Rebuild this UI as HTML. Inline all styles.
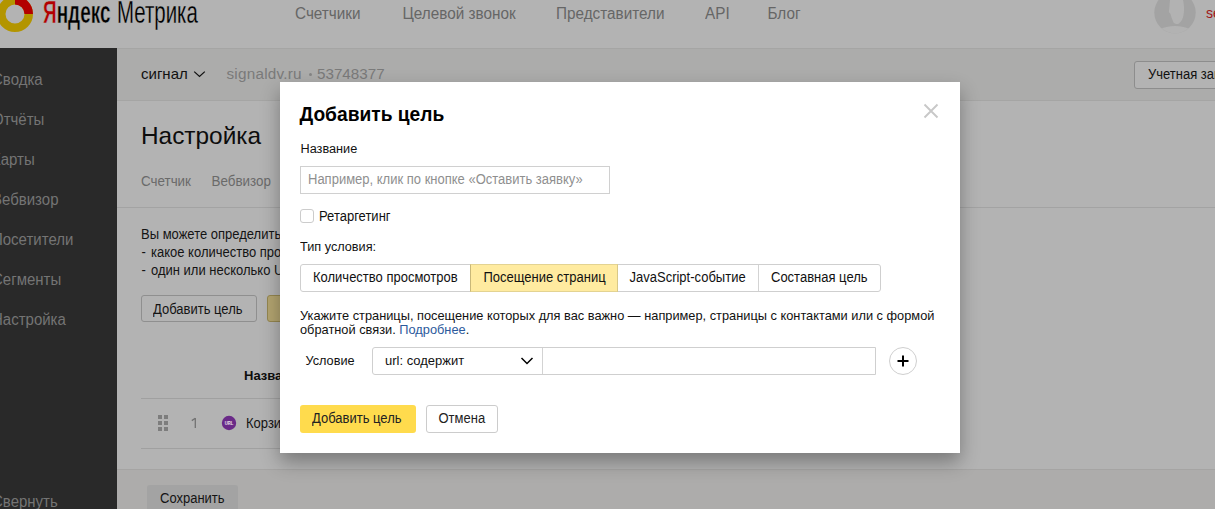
<!DOCTYPE html>
<html><head><meta charset="utf-8"><style>
html,body{margin:0;padding:0;width:1215px;height:509px;overflow:hidden;background:#b3b3b3;}
body{position:relative;font-family:"Liberation Sans",sans-serif;}
.t{position:absolute;white-space:nowrap;}
.b{position:absolute;}
</style></head><body>
<div id="hdr" class="b" style="left:0px;top:0px;width:1215px;height:48px;background:#b3b3b3"></div>
<div id="side" class="b" style="left:0px;top:48px;width:117px;height:461px;background:#292929"></div>
<div id="sub" class="b" style="left:117px;top:48px;width:1098px;height:53px;background:#acacab;border-top:1px solid #a5a5a4;border-bottom:1px solid #a5a5a4;box-sizing:border-box"></div>
<div id="content" class="b" style="left:117px;top:101px;width:1098px;height:368px;background:#b3b3b3"></div>
<div id="foot" class="b" style="left:117px;top:469px;width:1098px;height:40px;background:#adacab;border-top:1px solid #a5a4a3;box-sizing:border-box"></div>
<svg class="b" style="left:0;top:0" width="40" height="40" viewBox="0 0 40 40">
<circle cx="15" cy="14" r="13.75" fill="none" stroke="#b39500" stroke-width="8.5"/>
<path d="M15 0.25 A13.75 13.75 0 0 1 28.75 14" fill="none" stroke="#b30000" stroke-width="8.5"/>
</svg>
<div id="logo1" class="t" style="left:43px;top:-4.29px;font-size:32px;line-height:32px;color:#000;font-weight:700;letter-spacing:0px;transform:scaleX(0.593);transform-origin:0 0;-webkit-text-stroke:0.55px #b3b3b3"><span style="color:#b30000">Я</span>ндекс</div>
<div id="logo2" class="t" style="left:117px;top:-4.49px;font-size:32px;line-height:32px;color:#000;font-weight:400;letter-spacing:0px;transform:scaleX(0.639);transform-origin:0 0;-webkit-text-stroke:0.3px #b3b3b3">Метрика</div>
<div id="n1" class="t" style="left:295px;top:6.15px;font-size:15.3px;line-height:15.3px;color:#666666;font-weight:400;letter-spacing:0px;transform:scaleY(1.1);transform-origin:0 12.95px;">Счетчики</div>
<div id="n2" class="t" style="left:402.5px;top:6.15px;font-size:15.3px;line-height:15.3px;color:#666666;font-weight:400;letter-spacing:0px;transform:scaleY(1.1);transform-origin:0 12.95px;">Целевой звонок</div>
<div id="n3" class="t" style="left:556px;top:6.15px;font-size:15.3px;line-height:15.3px;color:#666666;font-weight:400;letter-spacing:0px;transform:scaleY(1.1);transform-origin:0 12.95px;">Представители</div>
<div id="n4" class="t" style="left:705px;top:6.15px;font-size:15.3px;line-height:15.3px;color:#666666;font-weight:400;letter-spacing:0px;transform:scaleY(1.1);transform-origin:0 12.95px;">API</div>
<div id="n5" class="t" style="left:767.5px;top:6.15px;font-size:15.3px;line-height:15.3px;color:#666666;font-weight:400;letter-spacing:0px;transform:scaleY(1.1);transform-origin:0 12.95px;">Блог</div>
<svg class="b" style="left:1150px;top:-12px" width="50" height="50" viewBox="0 0 50 50">
<defs><clipPath id="avc"><circle cx="25" cy="24.6" r="20.7"/></clipPath></defs>
<circle cx="25" cy="24.6" r="20.7" fill="#a3a3a3"/>
<g clip-path="url(#avc)" fill="#b2b2b2">
<path d="M20 12 C22 11 30 10 33 12 C34 16 34.5 22 33.5 27 C33 31 31 34 29 35.5 C27 36.5 25 36 23.5 34.5 C22 31 21 28 20.5 26 C19.5 25 18.5 24 19 22.5 C19.5 20 19.5 16 20 12Z"/>
<ellipse cx="25" cy="50" rx="22" ry="12"/>
</g>
</svg>
<div id="usr" class="t" style="left:1206px;top:5.95px;font-size:14px;line-height:14px;color:#a01818;font-weight:400;letter-spacing:0px;">se</div>
<div id="sd1" class="t" style="left:-8px;top:72.10px;font-size:15px;line-height:15px;color:#747474;font-weight:400;letter-spacing:0px;transform:scaleY(1.04);transform-origin:0 12.70px;">Сводка</div>
<div id="sd2" class="t" style="left:-8px;top:112.10px;font-size:15px;line-height:15px;color:#747474;font-weight:400;letter-spacing:0px;transform:scaleY(1.04);transform-origin:0 12.70px;">Отчёты</div>
<div id="sd3" class="t" style="left:-8px;top:151.90px;font-size:15px;line-height:15px;color:#747474;font-weight:400;letter-spacing:0px;transform:scaleY(1.04);transform-origin:0 12.70px;">Карты</div>
<div id="sd4" class="t" style="left:-8px;top:191.90px;font-size:15px;line-height:15px;color:#747474;font-weight:400;letter-spacing:0px;transform:scaleY(1.04);transform-origin:0 12.70px;">Вебвизор</div>
<div id="sd5" class="t" style="left:-8px;top:231.90px;font-size:15px;line-height:15px;color:#747474;font-weight:400;letter-spacing:0px;transform:scaleY(1.04);transform-origin:0 12.70px;">Посетители</div>
<div id="sd6" class="t" style="left:-8px;top:271.90px;font-size:15px;line-height:15px;color:#747474;font-weight:400;letter-spacing:0px;transform:scaleY(1.04);transform-origin:0 12.70px;">Сегменты</div>
<div id="sd7" class="t" style="left:-8px;top:311.90px;font-size:15px;line-height:15px;color:#747474;font-weight:400;letter-spacing:0px;transform:scaleY(1.04);transform-origin:0 12.70px;">Настройка</div>
<div id="sd8" class="t" style="left:-8px;top:493.60px;font-size:15px;line-height:15px;color:#747474;font-weight:400;letter-spacing:0px;transform:scaleY(1.04);transform-origin:0 12.70px;">Свернуть</div>
<div id="sig" class="t" style="left:141px;top:66.30px;font-size:15px;line-height:15px;color:#111;font-weight:400;letter-spacing:0px;">сигнал</div>
<svg class="b" style="left:193px;top:70px" width="13" height="9" viewBox="0 0 13 9"><path d="M1.2 1.6 L6.5 6.4 L11.8 1.6" fill="none" stroke="#111" stroke-width="1.25"/></svg>
<div id="sigd" class="t" style="left:226.5px;top:66.05px;font-size:15.3px;line-height:15.3px;color:#7a7a7a;font-weight:400;letter-spacing:0.22px;">signaldv.ru</div>
<div id="dot" class="b" style="left:309px;top:73px;width:3px;height:3px;background:#858585;border-radius:50%"></div>
<div id="sigd2" class="t" style="left:317px;top:66.13px;font-size:15.2px;line-height:15.2px;color:#7a7a7a;font-weight:400;letter-spacing:0px;">53748377</div>
<div id="acct" class="b" style="left:1134px;top:61px;width:126px;height:28px;background:#b3b3b3;border:1px solid #8d8d8d;border-radius:3px;box-sizing:border-box"></div>
<div id="acctt" class="t" style="left:1148px;top:67.60px;font-size:13px;line-height:13px;color:#111;font-weight:400;letter-spacing:0px;transform:scaleY(1.1);transform-origin:0 11.00px;">Учетная запись</div>
<div id="title" class="t" style="left:141px;top:123.65px;font-size:24.4px;line-height:24.4px;color:#0d0d0d;font-weight:400;letter-spacing:0px;">Настройка</div>
<div id="tab1" class="t" style="left:141px;top:174.76px;font-size:13.4px;line-height:13.4px;color:#6a6a6a;font-weight:400;letter-spacing:0px;transform:scaleY(1.08);transform-origin:0 11.34px;">Счетчик</div>
<div id="tab2" class="t" style="left:211.5px;top:174.76px;font-size:13.4px;line-height:13.4px;color:#6a6a6a;font-weight:400;letter-spacing:0px;transform:scaleY(1.08);transform-origin:0 11.34px;">Вебвизор</div>
<div id="tabline" class="b" style="left:117px;top:207px;width:1098px;height:1px;background:#a3a3a3"></div>
<div id="p1" class="t" style="left:141px;top:228.30px;font-size:13px;line-height:13px;color:#141414;font-weight:400;letter-spacing:0px;transform:scaleY(1.06);transform-origin:0 11.00px;">Вы можете определить</div>
<div id="p2d" class="t" style="left:141.5px;top:246.00px;font-size:13px;line-height:13px;color:#141414;font-weight:400;letter-spacing:0px;transform:scaleY(1.06);transform-origin:0 11.00px;">-</div>
<div id="p2" class="t" style="left:151px;top:246.00px;font-size:13px;line-height:13px;color:#141414;font-weight:400;letter-spacing:0px;transform:scaleY(1.06);transform-origin:0 11.00px;">какое количество просмотров</div>
<div id="p3d" class="t" style="left:141.5px;top:263.70px;font-size:13px;line-height:13px;color:#141414;font-weight:400;letter-spacing:0px;transform:scaleY(1.06);transform-origin:0 11.00px;">-</div>
<div id="p3" class="t" style="left:151px;top:263.70px;font-size:13px;line-height:13px;color:#141414;font-weight:400;letter-spacing:0px;transform:scaleY(1.06);transform-origin:0 11.00px;">один или несколько URL</div>
<div id="addb" class="b" style="left:141px;top:295px;width:116px;height:27px;background:#b3b3b3;border:1px solid #8f8f8f;border-radius:3px;box-sizing:border-box"></div>
<div id="addbt" class="t" style="left:153px;top:302.60px;font-size:13px;line-height:13px;color:#141414;font-weight:400;letter-spacing:0px;transform:scaleY(1.06);transform-origin:0 11.00px;">Добавить цель</div>
<div id="yb" class="b" style="left:267px;top:295px;width:33px;height:27px;background:#b3a470;border:1px solid #948650;border-radius:3px;box-sizing:border-box"></div>
<div id="th" class="t" style="left:244px;top:368.70px;font-size:13px;line-height:13px;color:#0d0d0d;font-weight:700;letter-spacing:0px;transform:scaleY(1.04);transform-origin:0 11.00px;">Назва</div>
<div id="l1" class="b" style="left:141px;top:398px;width:799px;height:1px;background:#a0a0a0"></div>
<div id="" class="b" style="left:158px;top:415px;width:4px;height:4px;background:#7d7d7d"></div>
<div id="" class="b" style="left:158px;top:421px;width:4px;height:4px;background:#7d7d7d"></div>
<div id="" class="b" style="left:158px;top:427px;width:4px;height:4px;background:#7d7d7d"></div>
<div id="" class="b" style="left:164px;top:415px;width:4px;height:4px;background:#7d7d7d"></div>
<div id="" class="b" style="left:164px;top:421px;width:4px;height:4px;background:#7d7d7d"></div>
<div id="" class="b" style="left:164px;top:427px;width:4px;height:4px;background:#7d7d7d"></div>
<svg class="b" style="left:188px;top:414px" width="12" height="16" viewBox="0 0 12 16"><path d="M7.3 4 V14 M3.8 6.6 L7.3 4.2" fill="none" stroke="#727272" stroke-width="1.3"/></svg>
<svg class="b" style="left:221px;top:415px" width="16" height="16" viewBox="0 0 16 16"><circle cx="8" cy="8" r="7.2" fill="#6a2a88"/><text x="8" y="10.1" font-family="Liberation Sans" font-size="5.6" font-weight="700" fill="#e8e0ec" text-anchor="middle" textLength="8.6" lengthAdjust="spacingAndGlyphs">URL</text></svg>
<div id="kor" class="t" style="left:246px;top:417.00px;font-size:13px;line-height:13px;color:#141414;font-weight:400;letter-spacing:0px;transform:scaleY(1.06);transform-origin:0 11.00px;">Корзина</div>
<div id="l2" class="b" style="left:141px;top:448px;width:799px;height:1px;background:#a0a0a0"></div>
<div id="save" class="b" style="left:147px;top:485px;width:91px;height:30px;background:#a3a3a3;border-radius:3px"></div>
<div id="savet" class="t" style="left:160px;top:492.10px;font-size:13px;line-height:13px;color:#141414;font-weight:400;letter-spacing:0px;transform:scaleY(1.06);transform-origin:0 11.00px;">Сохранить</div>
<div id="modal" class="b" style="left:280px;top:82px;width:680px;height:371px;background:#fff;box-shadow:0 9px 18px rgba(0,0,0,0.32)"></div>
<svg class="b" style="left:923px;top:103px" width="16" height="16" viewBox="0 0 16 16"><path d="M1.5 1.5 L14.5 14.5 M14.5 1.5 L1.5 14.5" stroke="#c8c8c8" stroke-width="1.9"/></svg>
<div id="mt" class="t" style="left:299.5px;top:104.65px;font-size:19.2px;line-height:19.2px;color:#000;font-weight:700;letter-spacing:0px;transform:scaleY(1.08);transform-origin:0 16.25px;">Добавить цель</div>
<div id="mn" class="t" style="left:300.5px;top:142.55px;font-size:12.7px;line-height:12.7px;color:#111;font-weight:400;letter-spacing:0px;transform:scaleY(1.06);transform-origin:0 10.75px;">Название</div>
<div id="inp" class="b" style="left:300px;top:166px;width:310px;height:28px;background:#fff;border:1px solid #d0d0d0;box-sizing:border-box"></div>
<div id="ph" class="t" style="left:308px;top:173.20px;font-size:13px;line-height:13px;color:#8f8f8f;font-weight:400;letter-spacing:0px;transform:scaleY(1.08);transform-origin:0 11.00px;">Например, клик по кнопке «Оставить заявку»</div>
<div id="cb" class="b" style="left:300px;top:209px;width:14px;height:14px;background:#fff;border:1px solid #ccc;border-radius:3px;box-sizing:border-box"></div>
<div id="ret" class="t" style="left:319px;top:209.60px;font-size:13px;line-height:13px;color:#111;font-weight:400;letter-spacing:0px;transform:scaleY(1.08);transform-origin:0 11.00px;">Ретаргетинг</div>
<div id="typ" class="t" style="left:300px;top:240.95px;font-size:12.7px;line-height:12.7px;color:#111;font-weight:400;letter-spacing:0px;transform:scaleY(1.06);transform-origin:0 10.75px;">Тип условия:</div>
<div id="seg" class="b" style="left:300px;top:264px;width:581px;height:28px;background:#fff;border:1px solid #cfcfcf;border-radius:3px;box-sizing:border-box"></div>
<div id="segy" class="b" style="left:470px;top:264px;width:148px;height:28px;background:#ffeba0;border:1px solid #e3d392;border-left-color:#c9b879;border-right-color:#d8c888;box-sizing:border-box"></div>
<div id="sd_3" class="b" style="left:758px;top:265px;width:1px;height:26px;background:#d3d3d3"></div>
<div id="s1" class="t" style="left:313px;top:271.00px;font-size:13px;line-height:13px;color:#111;font-weight:400;letter-spacing:0px;transform:scaleY(1.1);transform-origin:0 11.00px;">Количество просмотров</div>
<div id="s2" class="t" style="left:483.5px;top:271.00px;font-size:13px;line-height:13px;color:#111;font-weight:400;letter-spacing:0px;transform:scaleY(1.1);transform-origin:0 11.00px;">Посещение страниц</div>
<div id="s3" class="t" style="left:629.5px;top:271.00px;font-size:13px;line-height:13px;color:#111;font-weight:400;letter-spacing:0px;transform:scaleY(1.1);transform-origin:0 11.00px;">JavaScript-событие</div>
<div id="s4" class="t" style="left:771px;top:271.00px;font-size:13px;line-height:13px;color:#111;font-weight:400;letter-spacing:0px;transform:scaleY(1.1);transform-origin:0 11.00px;">Составная цель</div>
<div id="pp1" class="t" style="left:300px;top:309.56px;font-size:12.8px;line-height:12.8px;color:#111;font-weight:400;letter-spacing:0px;transform:scaleY(1.06);transform-origin:0 10.84px;">Укажите страницы, посещение которых для вас важно — например, страницы с контактами или с формой</div>
<div id="pp2" class="t" style="left:300px;top:323.86px;font-size:12.8px;line-height:12.8px;color:#111;font-weight:400;letter-spacing:0px;transform:scaleY(1.06);transform-origin:0 10.84px;">обратной связи. <span style="color:#2c5a9c">Подробнее</span>.</div>
<div id="cond" class="t" style="left:305.5px;top:354.65px;font-size:12.7px;line-height:12.7px;color:#111;font-weight:400;letter-spacing:0px;transform:scaleY(1.06);transform-origin:0 10.75px;">Условие</div>
<div id="sel" class="b" style="left:372px;top:347px;width:504px;height:28px;background:#fff;border:1px solid #cfcfcf;border-radius:3px 0 0 3px;box-sizing:border-box"></div>
<div id="seld" class="b" style="left:542px;top:348px;width:1px;height:26px;background:#d3d3d3"></div>
<div id="selt" class="t" style="left:385px;top:354.00px;font-size:13px;line-height:13px;color:#111;font-weight:400;letter-spacing:0px;">url: содержит</div>
<svg class="b" style="left:519.5px;top:356px" width="14" height="10" viewBox="0 0 14 10"><path d="M1.5 2 L7 7.5 L12.5 2" fill="none" stroke="#000" stroke-width="1.5"/></svg>
<svg class="b" style="left:888px;top:346px" width="30" height="30" viewBox="0 0 30 30"><circle cx="15" cy="15" r="13.5" fill="#fff" stroke="#cfcfcf" stroke-width="1"/><path d="M15 9.5 V20.5 M9.5 15 H20.5" stroke="#000" stroke-width="2"/></svg>
<div id="ok" class="b" style="left:300px;top:405px;width:116px;height:28px;background:#ffdb4d;border-radius:3px"></div>
<div id="okt" class="t" style="left:312px;top:412.30px;font-size:13px;line-height:13px;color:#222;font-weight:400;letter-spacing:0px;transform:scaleY(1.08);transform-origin:0 11.00px;">Добавить цель</div>
<div id="cn" class="b" style="left:426px;top:405px;width:72px;height:28px;background:#fff;border:1px solid #ccc;border-radius:3px;box-sizing:border-box"></div>
<div id="cnt" class="t" style="left:438.5px;top:412.30px;font-size:13px;line-height:13px;color:#222;font-weight:400;letter-spacing:0px;transform:scaleY(1.1);transform-origin:0 11.00px;">Отмена</div>
</body></html>
